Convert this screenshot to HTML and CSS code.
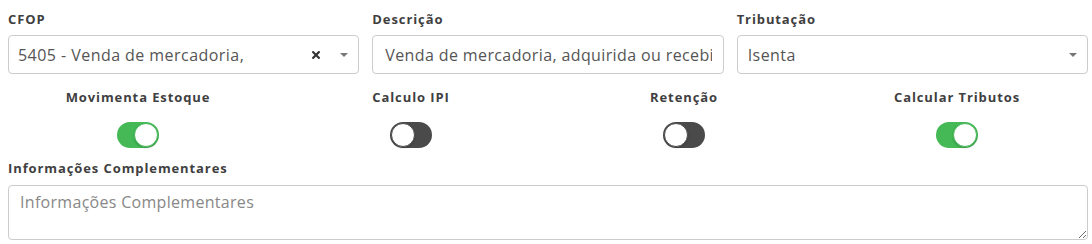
FILE: index.html
```html
<!DOCTYPE html>
<html lang="pt-BR">
<head>
<meta charset="utf-8">
<link rel="stylesheet" href="styles.css">
</head>
<body>
<div class="form">
  <div class="row3">
    <div class="field">
      <label class="lbl">CFOP</label>
      <div class="control select">
        <span class="value">5405 - Venda de mercadoria,</span>
        <span class="clear">
          <svg width="8" height="8" viewBox="0 0 8 8"><path d="M1.2 1.2 L6.8 6.8 M6.8 1.2 L1.2 6.8" stroke="#333" stroke-width="2.2" stroke-linecap="square"/></svg>
        </span>
        <span class="caret"></span>
      </div>
    </div>
    <div class="field">
      <label class="lbl">Descrição</label>
      <input class="control text" type="text" readonly value="Venda de mercadoria, adquirida ou recebida de terceiros em operação com mercadoria sujeita ao regime de substituição tributária">
    </div>
    <div class="field">
      <label class="lbl">Tributação</label>
      <div class="control select trib">
        <span class="value">Isenta</span>
        <span class="caret"></span>
      </div>
    </div>
  </div>
  <div class="row4">
    <div class="sw-col">
      <span class="lbl">Movimenta Estoque</span>
      <span class="switch on"><span class="knob"></span></span>
    </div>
    <div class="sw-col">
      <span class="lbl">Calculo IPI</span>
      <span class="switch"><span class="knob"></span></span>
    </div>
    <div class="sw-col">
      <span class="lbl">Retenção</span>
      <span class="switch"><span class="knob"></span></span>
    </div>
    <div class="sw-col">
      <span class="lbl">Calcular Tributos</span>
      <span class="switch on"><span class="knob"></span></span>
    </div>
  </div>
  <div class="field full">
    <label class="lbl">Informações Complementares</label>
    <textarea class="area" placeholder="Informações Complementares"></textarea>
  </div>
</div>
</body>
</html>
```
FILE: styles.css
```css
* { box-sizing: border-box; }
html, body { margin: 0; padding: 0; background: #fff; }
body {
  font-family: "Open Sans", "Liberation Sans", sans-serif;
  color: #555;
  width: 1092px;
  height: 244px;
  overflow: hidden;
}
.form { padding: 9px 4px 0 8px; }
.row3 {
  display: grid;
  grid-template-columns: repeat(3, minmax(0, 1fr));
  column-gap: 13px;
}
.field { display: flex; flex-direction: column; min-width: 0; }
.lbl {
  font-weight: 700;
  font-size: 13px;
  color: #3f3f3f;
  line-height: 20px;
  height: 20px;
  margin-bottom: 6px;
  letter-spacing: 0.9px;
  white-space: nowrap;
}
.control {
  height: 39px;
  width: 100%;
  margin: 0;
  border: 1px solid #ccc;
  border-radius: 4px;
  display: flex;
  align-items: center;
  font-family: inherit;
  font-size: 16px;
  color: #555;
  background: #fff;
  overflow: hidden;
  letter-spacing: 0.45px;
}
.select { padding: 0 10px 0 9px; }
.text { padding: 0 11px 0 12px; letter-spacing: 0.38px; outline: none; }
.trib { padding-left: 10px; }
.value { flex: 1; min-width: 0; white-space: nowrap; }
.clear { display: flex; width: 8px; margin-right: 20px; }
.caret {
  width: 0; height: 0;
  border-left: 4px solid transparent;
  border-right: 4px solid transparent;
  border-top: 4px solid #777;
}
.row4 {
  display: grid;
  grid-template-columns: repeat(4, minmax(0, 1fr));
  margin: 13px -5.5px 0 -6.5px;
}
.sw-col {
  display: flex;
  flex-direction: column;
  align-items: center;
}
.sw-col .lbl { margin-bottom: 15px; }
.switch {
  width: 42px;
  height: 26px;
  border-radius: 13px;
  background: #4a4a4a;
  position: relative;
  display: block;
}
.switch .knob {
  position: absolute;
  top: 1px; left: 1px;
  width: 24px; height: 24px;
  border-radius: 50%;
  background: #fff;
  border: 1px solid #4a4a4a;
  box-shadow: 0 1px 2px rgba(0,0,0,0.2);
}
.switch.on { background: #44b955; }
.switch.on .knob { left: 17px; border-color: #44b955; }
.full { margin-top: 10px; }
.full .lbl { margin-bottom: 7px; }
.area {
  display: block;
  width: 100%;
  margin: 0;
  height: 55px;
  border: 1px solid #ccc;
  border-radius: 4px;
  font-family: inherit;
  font-size: 16px;
  line-height: 22px;
  padding: 5px 11px;
  color: #555;
  resize: vertical;
  letter-spacing: 0.3px;
  outline: none;
}
.area::placeholder { color: #888; }
```
